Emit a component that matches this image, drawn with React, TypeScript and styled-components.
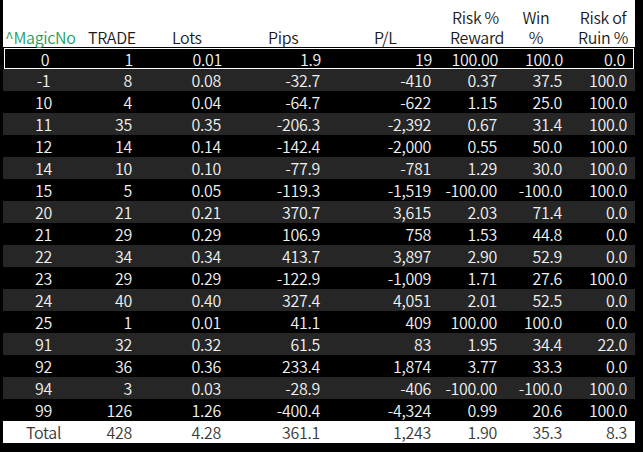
import React from "react";
import styled, { createGlobalStyle } from "styled-components";

const Global = createGlobalStyle`
  html, body { margin: 0; padding: 0; background: #000; }
  body { font-family: "Noto Sans CJK JP", "Noto Sans", sans-serif; }
`;

const COLS = "81px 52px 89px 99px 111px 66px 65px 69px";

const Frame = styled.div`
  width: 643px;
  height: 452px;
  background: #000;
  padding: 0 8px 0 3px;
  box-sizing: border-box;
`;

const Header = styled.div`
  display: grid;
  grid-template-columns: ${COLS};
  height: 47px;
  background: #fff;
  align-items: end;
  font-size: 16px;
  font-weight: 350;
  letter-spacing: -0.3px;
  line-height: 20px;
  color: #1a1a1a;
  padding-bottom: 0;
  box-sizing: border-box;
  margin-bottom: 1px;
`;

const HeadCell = styled.div<{ $pl?: number; $pr?: number; $center?: boolean; $green?: boolean }>`
  padding-left: ${(p) => p.$pl ?? 0}px;
  padding-right: ${(p) => p.$pr ?? 0}px;
  text-align: ${(p) => (p.$center ? "center" : "left")};
  color: ${(p) => (p.$green ? "#23a061" : "inherit")};
  white-space: nowrap;
`;

const Row = styled.div<{ $variant: "black" | "gray" | "selected" | "total" }>`
  display: grid;
  grid-template-columns: ${COLS};
  align-items: center;
  font-size: 16px;
  font-weight: 350;
  letter-spacing: -0.3px;
  line-height: 20px;
  box-sizing: border-box;
  background: ${(p) =>
    p.$variant === "gray" ? "#262626" : p.$variant === "total" ? "#fff" : "#000"};
  color: ${(p) => (p.$variant === "total" ? "#3a3a3a" : "#f2f2f2")};
  border: ${(p) => (p.$variant === "selected" ? "1px solid #fff" : "none")};
  margin: ${(p) => (p.$variant === "selected" ? "1px 1px 0 1px" : "0")};
  height: ${(p) => (p.$variant === "selected" ? "21px" : "22px")};
  ${(p) => (p.$variant === "selected" ? "grid-template-columns: 80px 52px 89px 99px 111px 66px 65px 66px;" : "")}
`;

const Cell = styled.div<{ $center?: boolean; $pr?: number }>`
  text-align: ${(p) => (p.$center ? "center" : "right")};
  padding-right: ${(p) => (p.$center ? 0 : p.$pr ?? 4)}px;
  white-space: nowrap;
`;

type R = [string, string, string, string, string, string, string, string];

const rows: R[] = [
  ["0", "1", "0.01", "1.9", "19", "100.00", "100.0", "0.0"],
  ["-1", "8", "0.08", "-32.7", "-410", "0.37", "37.5", "100.0"],
  ["10", "4", "0.04", "-64.7", "-622", "1.15", "25.0", "100.0"],
  ["11", "35", "0.35", "-206.3", "-2,392", "0.67", "31.4", "100.0"],
  ["12", "14", "0.14", "-142.4", "-2,000", "0.55", "50.0", "100.0"],
  ["14", "10", "0.10", "-77.9", "-781", "1.29", "30.0", "100.0"],
  ["15", "5", "0.05", "-119.3", "-1,519", "-100.00", "-100.0", "100.0"],
  ["20", "21", "0.21", "370.7", "3,615", "2.03", "71.4", "0.0"],
  ["21", "29", "0.29", "106.9", "758", "1.53", "44.8", "0.0"],
  ["22", "34", "0.34", "413.7", "3,897", "2.90", "52.9", "0.0"],
  ["23", "29", "0.29", "-122.9", "-1,009", "1.71", "27.6", "100.0"],
  ["24", "40", "0.40", "327.4", "4,051", "2.01", "52.5", "0.0"],
  ["25", "1", "0.01", "41.1", "409", "100.00", "100.0", "0.0"],
  ["91", "32", "0.32", "61.5", "83", "1.95", "34.4", "22.0"],
  ["92", "36", "0.36", "233.4", "1,874", "3.77", "33.3", "0.0"],
  ["94", "3", "0.03", "-28.9", "-406", "-100.00", "-100.0", "100.0"],
  ["99", "126", "1.26", "-400.4", "-4,324", "0.99", "20.6", "100.0"],
];

const total: R = ["Total", "428", "4.28", "361.1", "1,243", "1.90", "35.3", "8.3"];

const RowCells: React.FC<{ r: R }> = ({ r }) => (
  <>
    <Cell $center>{r[0]}</Cell>
    <Cell>{r[1]}</Cell>
    <Cell>{r[2]}</Cell>
    <Cell>{r[3]}</Cell>
    <Cell>{r[4]}</Cell>
    <Cell>{r[5]}</Cell>
    <Cell>{r[6]}</Cell>
    <Cell $pr={8}>{r[7]}</Cell>
  </>
);

export default function App() {
  return (
    <>
      <Global />
      <Frame>
        <Header>
          <HeadCell $pl={2} $green>^MagicNo</HeadCell>
          <HeadCell $pl={4}>TRADE</HeadCell>
          <HeadCell $pl={36}>Lots</HeadCell>
          <HeadCell $pl={43}>Pips</HeadCell>
          <HeadCell $pl={50}>P/L</HeadCell>
          <HeadCell $pl={15} $center>
            Risk %<br />Reward
          </HeadCell>
          <HeadCell $pl={5} $center>
            Win<br />%
          </HeadCell>
          <HeadCell $pl={5} $center>
            Risk of<br />Ruin %
          </HeadCell>
        </Header>
        {rows.map((r, i) => (
          <Row key={r[0]} $variant={i === 0 ? "selected" : i % 2 === 1 ? "gray" : "black"}>
            <RowCells r={r} />
          </Row>
        ))}
        <Row $variant="total">
          <RowCells r={total} />
        </Row>
      </Frame>
    </>
  );
}
